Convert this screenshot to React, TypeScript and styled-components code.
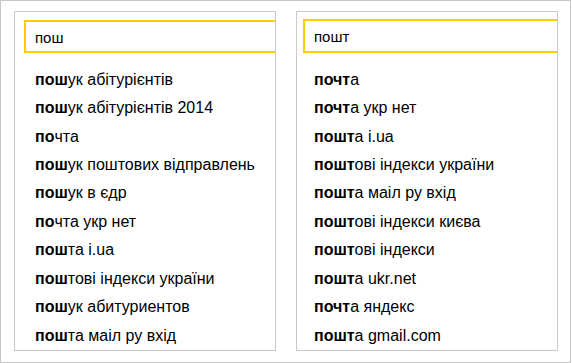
import React from 'react';
import styled, { createGlobalStyle } from 'styled-components';

const GlobalStyle = createGlobalStyle`
  html, body {
    margin: 0;
    padding: 0;
    background: #ffffff;
  }
  body {
    font-family: "Liberation Sans", Arial, sans-serif;
    color: #000000;
  }
`;

interface Suggestion {
  strong: string;
  rest: string;
}

interface Column {
  query: string;
  inset: number;
  lift: number;
  items: Suggestion[];
}

const columns: Column[] = [
  {
    query: 'пош',
    inset: 9,
    lift: 0,
    items: [
      { strong: 'пош', rest: 'ук абітурієнтів' },
      { strong: 'пош', rest: 'ук абітурієнтів 2014' },
      { strong: 'по', rest: 'чта' },
      { strong: 'пош', rest: 'ук поштових відправлень' },
      { strong: 'пош', rest: 'ук в єдр' },
      { strong: 'по', rest: 'чта укр нет' },
      { strong: 'пош', rest: 'та i.ua' },
      { strong: 'пош', rest: 'тові індекси україни' },
      { strong: 'пош', rest: 'ук абитуриентов' },
      { strong: 'пош', rest: 'та маіл ру вхід' },
    ],
  },
  {
    query: 'пошт',
    inset: 6,
    lift: 1,
    items: [
      { strong: 'почт', rest: 'а' },
      { strong: 'почт', rest: 'а укр нет' },
      { strong: 'пошт', rest: 'а i.ua' },
      { strong: 'пошт', rest: 'ові індекси україни' },
      { strong: 'пошт', rest: 'а маіл ру вхід' },
      { strong: 'пошт', rest: 'ові індекси києва' },
      { strong: 'пошт', rest: 'ові індекси' },
      { strong: 'пошт', rest: 'а ukr.net' },
      { strong: 'почт', rest: 'а яндекс' },
      { strong: 'пошт', rest: 'а gmail.com' },
    ],
  },
];

const Frame = styled.div`
  box-sizing: border-box;
  width: 571px;
  height: 363px;
  border: 1px solid #c6c6c6;
  padding: 10px 12px 0 13px;
  display: flex;
  align-items: flex-start;
  gap: 20px;
`;

const Panel = styled.div`
  box-sizing: border-box;
  width: 262px;
  height: 340px;
  border: 1px solid #c9c9c9;
  overflow: hidden;
  display: flex;
  flex-direction: column;
`;

const SearchBox = styled.div<{ $inset: number; $lift: number }>`
  box-sizing: border-box;
  height: 35px;
  margin: ${(p) => 8 - p.$lift}px -12px 0 ${(p) => p.$inset}px;
  border: 2px solid #ffcc00;
  padding-left: 9px;
  display: flex;
  align-items: center;
  padding-top: 2px;
  font-size: 15px;
  color: #000000;
`;

const List = styled.ul<{ $inset: number }>`
  list-style: none;
  margin: 13px 0 0;
  padding: 0 0 0 ${(p) => p.$inset + 11}px;
`;

const Item = styled.li`
  height: 28.44px;
  line-height: 28.44px;
  font-size: 16px;
  white-space: nowrap;
  color: #000000;

  b {
    font-weight: 700;
  }
`;

export default function App() {
  return (
    <>
      <GlobalStyle />
      <Frame>
        {columns.map((col) => (
          <Panel key={col.query}>
            <SearchBox $inset={col.inset} $lift={col.lift}>
              {col.query}
            </SearchBox>
            <List $inset={col.inset}>
              {col.items.map((it, i) => (
                <Item key={i}>
                  <b>{it.strong}</b>
                  {it.rest}
                </Item>
              ))}
            </List>
          </Panel>
        ))}
      </Frame>
    </>
  );
}
